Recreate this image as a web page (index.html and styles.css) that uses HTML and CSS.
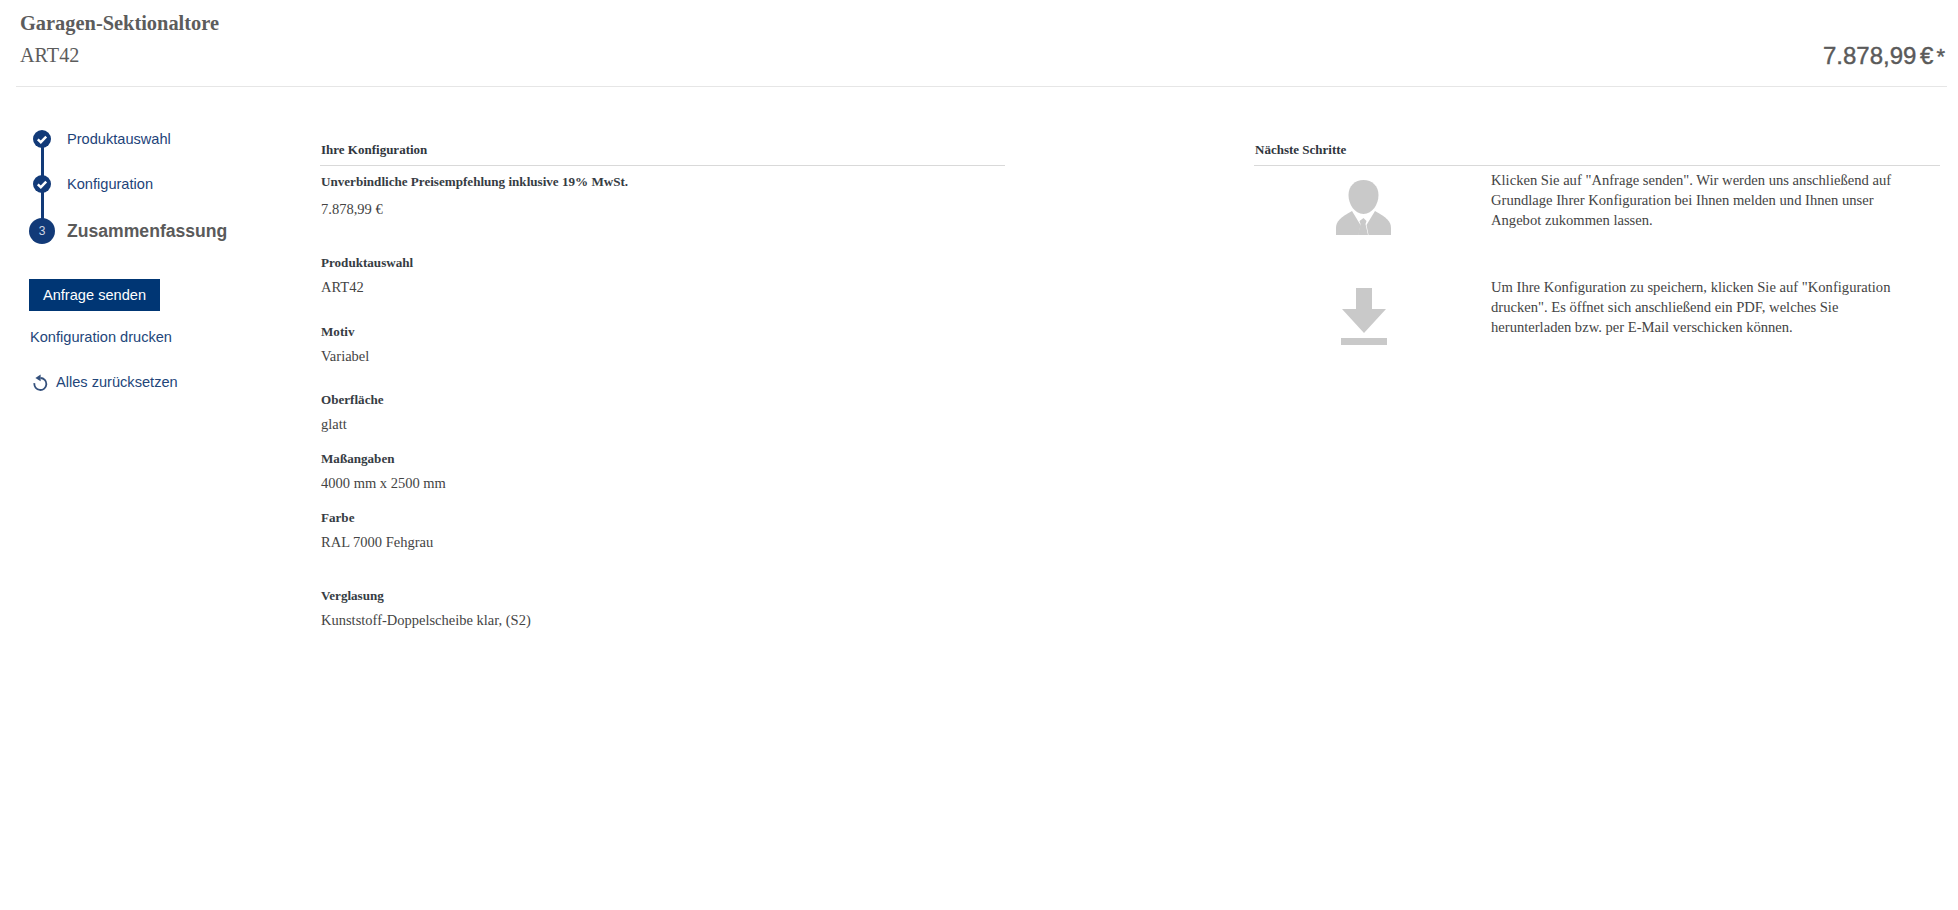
FILE: index.html
```html
<!DOCTYPE html>
<html lang="de">
<head>
<meta charset="utf-8">
<title>Garagen-Sektionaltore</title>
<link rel="stylesheet" href="styles.css">
</head>
<body>
<header class="top">
  <div class="top-left">
    <h1 class="title">Garagen-Sektionaltore</h1>
    <div class="subtitle">ART42</div>
  </div>
  <div class="total">7.878,99 €<span class="star">*</span></div>
</header>
<main class="main">
  <aside class="side">
    <ol class="steps">
      <li class="step">
        <span class="dot"><svg viewBox="0 0 18 18" width="18" height="18"><path d="M4.8 9.300l3 2.900 5.400-5.600" fill="none" stroke="#fff" stroke-width="2.400"/></svg></span>
        <a class="step-label">Produktauswahl</a>
      </li>
      <li class="step">
        <span class="dot"><svg viewBox="0 0 18 18" width="18" height="18"><path d="M4.8 9.300l3 2.900 5.400-5.600" fill="none" stroke="#fff" stroke-width="2.400"/></svg></span>
        <a class="step-label">Konfiguration</a>
      </li>
      <li class="step step-current">
        <span class="dot dot-big">3</span>
        <span class="step-label-current">Zusammenfassung</span>
      </li>
    </ol>
    <button class="btn">Anfrage senden</button>
    <a class="link link-print">Konfiguration drucken</a>
    <a class="link link-reset">
      <svg class="reset-icon" viewBox="0 0 16 17" width="16" height="17"><path d="M2.400 9.200A6 6 0 1 0 8.500 4" fill="none" stroke="#34507c" stroke-width="1.800"/><path d="M8.600 .6v6.600L3.400 3.900z" fill="#34507c"/></svg>
      Alles zurücksetzen
    </a>
  </aside>
  <section class="config">
    <h2 class="head">Ihre Konfiguration</h2>
    <div class="group group-price">
      <div class="label">Unverbindliche Preisempfehlung inklusive 19% MwSt.</div>
      <div class="value">7.878,99 €</div>
    </div>
    <div class="group group-tall">
      <div class="label">Produktauswahl</div>
      <div class="value">ART42</div>
    </div>
    <div class="group group-tall group-tall-last">
      <div class="label">Motiv</div>
      <div class="value">Variabel</div>
    </div>
    <div class="group group-short">
      <div class="label">Oberfläche</div>
      <div class="value">glatt</div>
    </div>
    <div class="group group-short">
      <div class="label">Maßangaben</div>
      <div class="value">4000 mm x 2500 mm</div>
    </div>
    <div class="group group-wide">
      <div class="label">Farbe</div>
      <div class="value">RAL 7000 Fehgrau</div>
    </div>
    <div class="group">
      <div class="label">Verglasung</div>
      <div class="value">Kunststoff-Doppelscheibe klar, (S2)</div>
    </div>
  </section>
  <section class="next">
    <h2 class="head">Nächste Schritte</h2>
    <div class="next-row">
      <div class="next-icon next-icon-person">
        <svg viewBox="0 0 55 55" width="55" height="55"><path d="M27.500 0c8.500 0 15 6 15 15 0 9-6 19-15 19s-15-10-15-19c0-9 6.500-15 15-15z" fill="#c9c9c9"/><path d="M16 31l8.500 14-2 10H0v-7c0-7 5-11 16-17z" fill="#c9c9c9"/><path d="M39 31l-8.500 14 2 10h22.500v-7c0-7-5-11-16-17z" fill="#c9c9c9"/><path d="M27.500 38l3 3-1 3 2.500 11h-10l2.500-11-1-3z" fill="#c9c9c9"/></svg>
      </div>
      <p class="next-text">Klicken Sie auf "Anfrage senden". Wir werden uns anschließend auf Grundlage Ihrer Konfiguration bei Ihnen melden und Ihnen unser Angebot zukommen lassen.</p>
    </div>
    <div class="next-row next-row-2">
      <div class="next-icon">
        <svg viewBox="0 0 46 57" width="46" height="57"><path d="M15 0h16v21h14L23 45 1 21h14z" fill="#c9c9c9"/><rect x="0" y="50" width="46" height="7" fill="#c9c9c9"/></svg>
      </div>
      <p class="next-text">Um Ihre Konfiguration zu speichern, klicken Sie auf "Konfiguration drucken". Es öffnet sich anschließend ein PDF, welches Sie herunterladen bzw. per E-Mail verschicken können.</p>
    </div>
  </section>
</main>
</body>
</html>
```
FILE: styles.css
```css
* { box-sizing: border-box; }
html, body { margin: 0; padding: 0; background: #fff; }
body { width: 1958px; height: 910px; overflow: hidden; font-family: "Liberation Serif", serif; color: #30363d; }

.top { display: flex; justify-content: space-between; align-items: flex-end; margin: 0 11px 0 16px; height: 87px; padding: 10px 4px 19px 4px; border-bottom: 1px solid #e6e6e6; }
.title { margin: 0; font-size: 20.4px; line-height: 24px; font-weight: 700; color: #5c5c5c; }
.subtitle { font-size: 20.2px; line-height: 24px; margin-top: 8px; color: #5c5c5c; }
.total { font-family: "Liberation Sans", sans-serif; font-size: 24px; line-height: 28px; color: #5a5a5a; margin: 0 -2px -4px 0; word-spacing: -3px; -webkit-text-stroke: .4px #5a5a5a; }
.star { margin-left: 3px; font-size: 22px; }

.main { display: flex; align-items: flex-start; padding-top: 43px; }

.side { width: 320px; flex: none; padding-left: 29px; font-family: "Liberation Sans", sans-serif; }
.steps { list-style: none; margin: 0; padding: 0; }
.step { position: relative; display: flex; align-items: center; height: 18px; padding-left: 4px; margin-bottom: 27px; }
.step:nth-child(2) { margin-bottom: 25px; }
.step:nth-child(1)::after, .step:nth-child(2)::after { content: ""; position: absolute; left: 12px; top: 16px; width: 3px; height: 34px; background: #123a78; }
.step-current { height: 26px; padding-left: 0; margin-bottom: 0; }
.dot { width: 18px; height: 18px; flex: none; border-radius: 50%; background: #123a78; display: flex; align-items: center; justify-content: center; }
.dot-big { width: 26px; height: 26px; color: #cfd6e4; font-size: 12px; }
.step-label { margin-left: 16px; font-size: 14.6px; color: #1d4379; }
.step-label-current { margin-left: 12px; font-size: 17.6px; font-weight: 700; color: #5a5a5a; }

.btn { display: block; width: 131px; height: 32px; margin-top: 35px; padding: 0; border: 0; background: #003674; color: #fff; font: 14.6px "Liberation Sans", sans-serif; }
.link { display: flex; align-items: center; font-size: 14.6px; color: #23467a; margin-left: 1px; }
.link-print { margin-top: 16px; height: 20px; }
.link-reset { margin-top: 25px; height: 20px; gap: 8px; margin-left: 3px; }
.reset-icon { flex: none; }

.config { width: 685px; flex: none; }
.next { width: 686px; flex: none; margin-left: 249px; }
.head { margin: 0; padding: 12px 1px 0; height: 36px; font-size: 13px; line-height: 16px; font-weight: 700; color: #30363d; border-bottom: 1px solid #d9d9d9; }

.group { padding-left: 1px; }
.group-price { padding-top: 4px; margin-bottom: 31px; }
.group-price .value { padding-top: 3px; margin-bottom: -2px; }
.group-tall { margin-bottom: 20px; }
.group-tall-last { margin-bottom: 19px; }
.group-short { margin-bottom: 10px; }
.group-wide { margin-bottom: 29px; }
.label { font-size: 13.1px; line-height: 24px; font-weight: 700; color: #363c43; }
.value { font-size: 14.5px; line-height: 25px; color: #444; }

.next-row { display: flex; align-items: flex-start; }
.next-row-2 { margin-top: 41px; }
.next-icon { width: 237px; flex: none; display: flex; justify-content: center; padding: 15px 18px 0 0; height: 66px; }
.next-icon-person { padding-top: 14px; }
.next-text { margin: 0; padding-top: 4px; width: 415px; font-size: 14.6px; line-height: 20px; color: #444; }
```
